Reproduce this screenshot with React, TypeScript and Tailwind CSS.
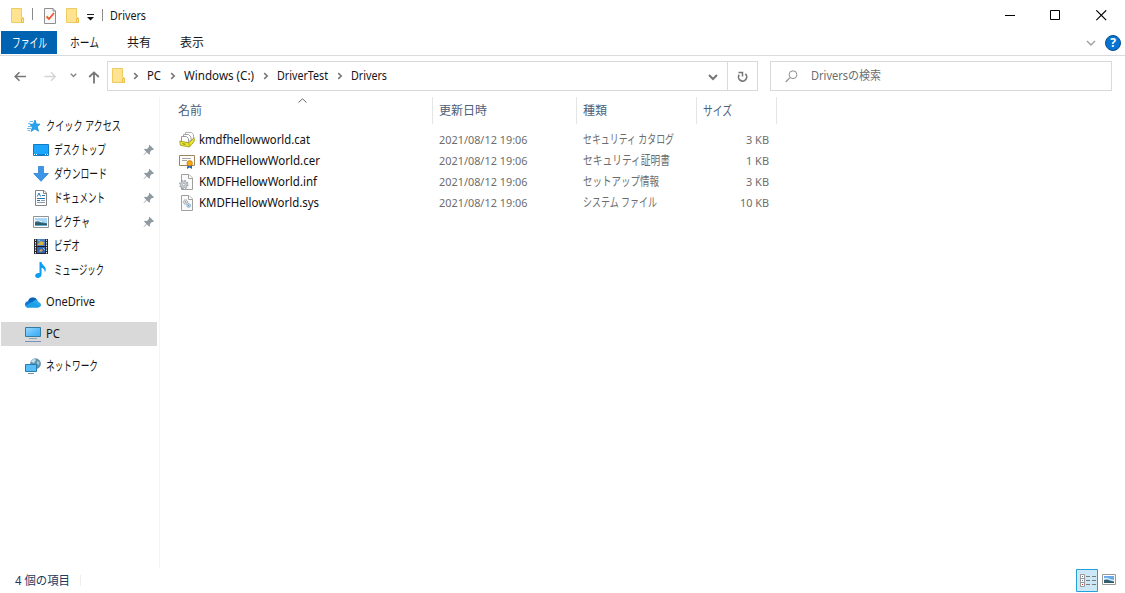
import { useLayoutEffect, useRef, type ReactNode } from "react";

function Label({ text, w, className = "" }: { text: string; w: number; className?: string }) {
  const ref = useRef<HTMLSpanElement>(null);
  useLayoutEffect(() => {
    const el = ref.current;
    if (!el) return;
    el.style.transform = "none";
    el.style.transform = `scaleX(${w / el.getBoundingClientRect().width})`;
  }, [text, w]);
  return (
    <span className={`block shrink-0 whitespace-nowrap ${className}`} style={{ width: w }}>
      <span ref={ref} className="inline-block origin-left">{text}</span>
    </span>
  );
}

function Svg({ w = 16, h = 16, children, className = "" }: { w?: number; h?: number; children: ReactNode; className?: string }) {
  return (
    <svg width={w} height={h} viewBox={`0 0 ${w} ${h}`} fill="none" className={`block shrink-0 ${className}`}>
      {children}
    </svg>
  );
}

const Folder = ({ className = "" }: { className?: string }) => (
  <Svg w={14} h={17} className={className}>
    <path d="M.5 1.500H10.500V10L12.500 11V15.500H.5Z" fill="#ffe391" stroke="#efcb63" />
    <path d="M10.500 11.500h2v4h-2z" fill="#ffe391" stroke="#e9c04d" />
  </Svg>
);

const Chevron = ({ className = "" }: { className?: string }) => (
  <Svg w={6} h={8} className={className}>
    <path d="M1.200 1.200L4.200 4L1.200 6.800" stroke="#777" strokeWidth="1.600" />
  </Svg>
);

const Pin = () => (
  <Svg w={12} h={12}>
    <path d="M6.500.8L11 5.300L9.900 6.100L8.900 5.900L6.900 8L7 10L6 10.500L3.800 8.300L.8 11.200L.5 10.900L3.200 7.700L1 5.500L1.900 4.700L4 4.900L6.100 2.800L5.700 1.700Z" fill="#8e9aa3" />
  </Svg>
);

const Star = () => (
  <Svg>
    <path d="M9 2L10.300 6L14 6.200L11.300 8.800L12.500 13.200L8.800 11L5 13.500L6.300 9.300L4 6.500L7.500 6Z" fill="#27a4f2" stroke="#1688d4" strokeWidth=".7" />
    <path d="M3.500 3.500H7M2 5.500H4.500M2 8.500H5M1 10.500H5M1.500 12.500H4" stroke="#4aaae6" strokeWidth=".8" />
  </Svg>
);

const Desktop = () => (
  <Svg>
    <path d="M.5 2.500H15.500V13.500H.5Z" fill="#1ca5fc" stroke="#137bc4" />
    <path d="M1 12.500H15" stroke="#0d7fd0" />
    <path d="M1 12.500h1M3 12.500h1M12 12.500h1M14 12.500h1" stroke="#fff" />
  </Svg>
);

const Download = () => (
  <Svg>
    <path d="M5.500.5H10.500V7.500H15.300L8 15.300L.7 7.500H5.500Z" fill="#3c95e7" stroke="#2e82d1" strokeWidth=".8" />
  </Svg>
);

const Document = () => (
  <Svg>
    <path d="M2.500.5H11L13.500 3V15.500H2.500Z" fill="#fff" stroke="#858585" />
    <path d="M10.500.5V3.500H13.500" stroke="#858585" />
    <path d="M4.300 6.500L6 3L7.600 6.500M9 5.500H12M4 8.500H12M4 10.500H7" stroke="#2377b5" />
    <path d="M8 10.500H12M4 12.500H12" stroke="#8b9aa5" />
  </Svg>
);

const Picture = () => (
  <Svg>
    <path d="M.5 2.500H15.500V13.500H.5Z" fill="#fff" stroke="#929292" />
    <path d="M2 4h12v8H2z" fill="#a9d7fa" />
    <path d="M2 7.500Q5 6 8 8L14 9.500V12H2Z" fill="#397895" />
    <path d="M2 9Q6 8 9 9.500H14V12H2Z" fill="#305b69" />
    <path d="M2 7Q5 6 9 8" stroke="#f1faff" />
    <path d="M2 11.500h12" stroke="#60a8d1" />
  </Svg>
);

const Video = () => (
  <Svg>
    <path d="M1 1h14v15H1z" fill="#25272a" />
    <path d="M4 1h8v7H4z" fill="#507fc4" />
    <path d="M4 9h8v6H4z" fill="#3465b5" />
    <path d="M2.500 1.500v14M13.500 1.500v14" stroke="#e5e5e5" strokeDasharray="1.500 1" />
    <path d="M5 6L8 3L11 4.500L10 7H5Z" fill="#d7b73a" />
    <path d="M6 13L8 11L10 12L8 14Z" fill="#dba63d" />
    <path d="M5 2l2 1M10 10l2 2" stroke="#87d0ff" />
    <path d="M4 8.500h8" stroke="#171b25" />
  </Svg>
);

const Music = () => (
  <Svg>
    <path d="M6.500 0H8.500C8.700 3.300 13.500 4 12.700 8.800L11.700 10.200C12.100 7.200 10.300 6.500 8.500 5.700V12.600C8.500 14.600 6.800 16 4.800 16C3 16 2 15 2.200 13.600C2.400 12 4.200 10.800 6.500 11.200Z" fill="#0c9cf3" />
  </Svg>
);

const OneDrive = () => (
  <Svg>
    <path d="M3 7A5 5 0 0 1 12.200 6L9 9L3.500 11Z" fill="#0765bd" />
    <path d="M4 7.500C1.500 6.800 0 8.500 0 10.400C0 12.300 1.500 13.500 3.500 13.500L10 9.500Z" fill="#1277d3" />
    <path d="M8 7.500C10 5.300 13 5.300 13.600 8.200C17 8.800 16.800 13.500 13 13.500H3.200C1.900 13.500 1 12.800.6 12Z" fill="#28a8ea" />
    <path d="M7.600 7.800L14.800 12.200L13 13.500H3.200C1.900 13.500 1 12.800.6 12Z" fill="#1d9ee8" />
  </Svg>
);

const Computer = () => (
  <Svg>
    <defs>
      <linearGradient id="screen" x1="0" y1="0" x2="1" y2="1">
        <stop stopColor="#9adbff" />
        <stop offset=".55" stopColor="#5bbcf9" />
        <stop offset="1" stopColor="#39a9f4" />
      </linearGradient>
    </defs>
    <path d="M.5 1.500H15.500V10.500H.5Z" fill="url(#screen)" stroke="#347c9f" />
    <path d="M4 12.500H12" stroke="#8da4b9" />
    <path d="M0 15.500H16" stroke="#7893c2" />
  </Svg>
);

const Network = () => (
  <Svg>
    <circle cx="10.500" cy="5.700" r="5.400" fill="#5e93ae" />
    <path d="M7 2Q10 0 11 2L9 5L6 4Z" fill="#c2dee6" />
    <path d="M12 3L14.500 4L14 7L12 6Z" fill="#9fc6d6" />
    <path d="M.5 6.500H11.500V13.500H.5Z" fill="#58bdf9" stroke="#277caf" />
    <path d="M3 15.500h6" stroke="#6893aa" />
  </Svg>
);

const Page = ({ children }: { children: ReactNode }) => (
  <Svg>
    <path d="M2.500.5H10L13.500 4V15.500H2.500Z" fill="#fafafa" stroke="#a0a0a0" />
    <path d="M9.500.5V4.500H13.500" fill="#fff" stroke="#a0a0a0" />
    {children}
  </Svg>
);

const CatFile = () => (
  <Svg>
    <path d="M6.500.5H12.500L14.500 2.500V7.500H6.500Z" fill="#fff" stroke="#b0b0b0" />
    <path d="M4.500 2.500H9.500L12 5V9H4.500Z" fill="#fff" stroke="#a5a5a5" />
    <path d="M2.500 4.500H7.500L9.500 6.500V10.500H2.500Z" fill="#fff" stroke="#9d9d9d" />
    <path d="M.8 9L9.800 10.800L15.200 5.800V9.500L10.500 15L1.300 13.300Z" fill="#ebe532" stroke="#96951c" strokeWidth=".8" />
    <path d="M9.800 10.800L10.500 14.800" stroke="#a6a01a" strokeWidth=".8" />
    <path d="M3.500 11.700l3 .6" stroke="#87851d" />
  </Svg>
);

const CerFile = () => (
  <Svg>
    <path d="M.5 2.500H15.500V12.500H.5Z" fill="#fffdf4" stroke="#9b8460" />
    <path d="M3 5.500H12M3 7.500H8" stroke="#a5a5b0" />
    <path d="M8.500 11L8 16L10.500 14.500L13 16V11Z" fill="#1868b8" />
    <circle cx="10.700" cy="10.300" r="2.700" fill="#f8aa18" stroke="#c47912" strokeWidth=".8" />
  </Svg>
);

const InfFile = () => (
  <Page>
    <circle cx="4.800" cy="10.500" r="4" stroke="#969ca2" strokeWidth="1.300" strokeDasharray="1.700 1.440" />
    <circle cx="4.800" cy="10.500" r="3.300" fill="#d4d7db" stroke="#989da3" strokeWidth=".7" />
    <circle cx="4.800" cy="10.500" r="1.300" fill="#fff" stroke="#8f959b" strokeWidth=".8" />
  </Page>
);

const SysFile = () => (
  <Page>
    <circle cx="6.500" cy="7" r="2.200" fill="#dce0e4" stroke="#929ca5" strokeDasharray="1.300 .6" />
    <circle cx="6.500" cy="7" r=".7" fill="#7e8b96" />
    <circle cx="9.700" cy="10.500" r="1.900" fill="#bddcf1" stroke="#7fa5c2" strokeDasharray="1.300 .5" />
    <circle cx="9.700" cy="10.500" r=".6" fill="#47789d" />
  </Page>
);

const quick = [
  { text: "デスクトップ", w: 52, icon: <Desktop />, pin: true },
  { text: "ダウンロード", w: 53, icon: <Download />, pin: true },
  { text: "ドキュメント", w: 51, icon: <Document />, pin: true },
  { text: "ピクチャ", w: 36, icon: <Picture />, pin: true },
  { text: "ビデオ", w: 26, icon: <Video />, pin: false },
  { text: "ミュージック", w: 50, icon: <Music />, pin: false },
];

const files = [
  { name: "kmdfhellowworld.cat", w: 111, type: "セキュリティ カタログ", tw: 91, size: "3 KB", sw: 23, icon: <CatFile /> },
  { name: "KMDFHellowWorld.cer", w: 121, type: "セキュリティ証明書", tw: 87, size: "1 KB", sw: 23, icon: <CerFile /> },
  { name: "KMDFHellowWorld.inf", w: 118, type: "セットアップ情報", tw: 76, size: "3 KB", sw: 23, icon: <InfFile /> },
  { name: "KMDFHellowWorld.sys", w: 120, type: "システム ファイル", tw: 74, size: "10 KB", sw: 29, icon: <SysFile /> },
];

const crumbs = [
  { text: "PC", w: 14 },
  { text: "Windows (C:)", w: 70 },
  { text: "DriverTest", w: 51 },
  { text: "Drivers", w: 36 },
];

export default function App() {
  return (
    <div className="flex h-[593px] w-[1125px] flex-col overflow-hidden bg-white font-['Noto_Sans','Noto_Sans_CJK_JP',sans-serif] text-[12px] leading-[18px] text-[#151515]">
      <header className="flex h-[31px] shrink-0 items-center pl-[11px]">
        <Folder className="-mt-px" />
        <div className="-mt-[3px] ml-[7px] h-3 w-px bg-[#8a8a8a]" />
        <Svg w={12} h={16} className="ml-[11px]">
          <path d="M.5.5H9L11.500 3V15.500H.5Z" fill="#f8f8f8" stroke="#8f8f8f" />
          <path d="M9 .5V3H11.500" stroke="#8f8f8f" />
          <path d="M2.500 8.500L5 11L10 5" stroke="#ee5726" strokeWidth="1.800" />
        </Svg>
        <Folder className="-mt-px ml-[10px]" />
        <Svg w={8} h={7} className="mt-[3px] ml-[7px]">
          <path d="M0 .5h7" stroke="#222" />
          <path d="M0 3H7L3.500 6.500Z" fill="#111" />
        </Svg>
        <div className="-mt-[2px] ml-[7px] h-3 w-px bg-[#8a8a8a]" />
        <Label text="Drivers" w={36} className="ml-[7px]" />
        <div className="ml-auto flex items-center pr-[18px]">
          <Svg w={10} h={11}><path d="M0 5.500h10" stroke="#000" /></Svg>
          <Svg w={11} h={11} className="ml-[35px]"><path d="M.5.5h9v9h-9z" stroke="#000" /></Svg>
          <Svg w={11} h={11} className="ml-[35px]"><path d="M.3.3L10.200 10.200M10.200.3L.3 10.200" stroke="#000" strokeWidth="1.200" /></Svg>
        </div>
      </header>

      <nav className="flex h-[25px] shrink-0 items-start border-b border-[#dadbdc] leading-[24px]">
        <div className="ml-px h-[23px] w-14 bg-[#0063b1] pl-[11px] leading-[23px] text-white"><Label text="ファイル" w={35} className="text-[13px]" /></div>
        <Label text="ホーム" w={29} className="-mt-px ml-[13px] text-[13px]" />
        <Label text="共有" w={24} className="ml-[28px]" />
        <Label text="表示" w={24} className="ml-[29px]" />
        <div className="ml-auto flex h-6 items-center pr-1">
          <Svg w={10} h={6}><path d="M1 1L5 5L9 1" stroke="#a0a0a0" strokeWidth="1.400" /></Svg>
          <div className="ml-[9px] flex size-4 items-center justify-center rounded-full border border-[#084f94] bg-[#0672d2] text-[12px] leading-none font-bold text-white">?</div>
        </div>
      </nav>

      <div className="flex h-10 shrink-0 pt-[5px]">
        <div className="flex h-[30px] w-[107px] items-center pl-[14px]">
          <Svg w={13} h={11}><path d="M5.500 1.300L1.200 5.500L5.500 9.700M1 5.500H12" stroke="#777" strokeWidth="1.600" /></Svg>
          <Svg w={13} h={11} className="ml-[17px]"><path d="M7 1.300L11.300 5.500L7 9.700M11.500 5.500H.5" stroke="#d4d4d4" strokeWidth="1.300" /></Svg>
          <Svg w={7} h={5} className="-mt-px ml-[13px]"><path d="M.8.800L3.500 3.500L6.200.8" stroke="#888" strokeWidth="1.500" /></Svg>
          <Svg w={12} h={13} className="mt-[2px] ml-[11px]"><path d="M1.200 6L6 1.400L10.800 6M6 1.500V12.500" stroke="#777" strokeWidth="1.800" /></Svg>
        </div>
        <div className="flex h-[30px] w-[651px] items-center border border-[#d9d9d9]">
          <Folder className="-mt-[2px] ml-[4px]" />
          {crumbs.map((c, i) => (
            <div key={c.text} className="flex items-center">
              <Chevron className={i === 0 ? "ml-[7px]" : "ml-[9px]"} />
              <Label text={c.text} w={c.w} className="ml-[8px]" />
            </div>
          ))}
          <Svg w={10} h={7} className="mt-[2px] mr-[9px] ml-auto"><path d="M1 1L5 5L9 1" stroke="#777" strokeWidth="2" /></Svg>
          <div className="flex h-full w-[30px] items-center justify-center border-l border-[#d9d9d9]">
            <Svg w={11} h={12} className="mt-px">
              <path d="M8.300 2.900A4.100 4.100 0 1 1 2.200 3.700" stroke="#777" strokeWidth="1.700" />
              <path d="M1.500 1.500H5.500V5.500" stroke="#777" strokeWidth="1.500" />
            </Svg>
          </div>
        </div>
        <div className="ml-[12px] flex h-[30px] w-[342px] items-center border border-[#d9d9d9] text-[#6d6d6d]">
          <Svg w={13} h={13} className="ml-[14px]">
            <circle cx="8" cy="4.700" r="3.900" stroke="#909090" /><path d="M5 7.700L.7 12" stroke="#909090" strokeWidth="1.200" />
          </Svg>
          <Label text="Driversの検索" w={70} className="ml-[13px]" />
        </div>
      </div>

      <main className="flex h-[472px] shrink-0">
        <aside className="mt-px h-[471px] w-[160px] shrink-0 border-r border-[#f4f4f4] pt-[17px]">
          <div className="flex h-6 items-center pl-[26px]">
            <Star /><Label text="クイック アクセス" w={75} className="-mt-[2px] ml-[4px] text-[13px]" />
          </div>
          {quick.map((q) => (
            <div key={q.text} className="flex h-6 items-center pl-[33px]">
              {q.icon}<Label text={q.text} w={q.w} className="-mt-[2px] ml-[5px] text-[13px]" />
              {q.pin && <div className="mr-[4px] ml-auto"><Pin /></div>}
            </div>
          ))}
          <div className="mt-2 flex h-6 items-center pl-[25px]"><OneDrive /><Label text="OneDrive" w={49} className="ml-[5px]" /></div>
          <div className="mt-2 ml-px flex h-6 w-[156px] items-center bg-[#d9d9d9] pl-[24px]"><Computer /><Label text="PC" w={14} className="ml-[5px]" /></div>
          <div className="mt-2 flex h-6 items-center pl-[25px]"><Network /><Label text="ネットワーク" w={52} className="-mt-[2px] ml-[5px] text-[13px]" /></div>
        </aside>

        <section className="w-[617px]">
          <div className="relative mt-px flex h-[27px] items-center text-[#4c607a]">
            <svg className="absolute top-[1px] left-[138px]" width="9" height="5" viewBox="0 0 9 5" fill="none"><path d="M.5 4.500L4.500.8L8.500 4.500" stroke="#666" /></svg>
            <div className="flex h-full w-[273px] items-center border-r border-[#e5e5e5] pl-[18px]"><Label text="名前" w={24} /></div>
            <div className="flex h-full w-[144px] items-center border-r border-[#e5e5e5] pl-[6px]"><Label text="更新日時" w={48} /></div>
            <div className="flex h-full w-[120px] items-center border-r border-[#e5e5e5] pl-[6px]"><Label text="種類" w={24} /></div>
            <div className="flex h-full w-[80px] items-center border-r border-[#e5e5e5] pl-[6px]"><Label text="サイズ" w={29} className="-mt-[2px] text-[13px]" /></div>
          </div>
          <div className="pt-[5px] text-[#6d6d6d]">
            {files.map((f) => (
              <div key={f.name} className="flex h-[21px] items-center">
                <div className="flex w-[279px] items-center pl-[19px]">
                  {f.icon}<Label text={f.name} w={f.w} className="ml-[4px] text-[#111]" />
                </div>
                <div className="w-[144px]"><Label text="2021/08/12 19:06" w={88.5} className="text-[11.500px]" /></div>
                <div className="w-[120px]"><Label text={f.type} w={f.tw} className="text-[12.500px]" /></div>
                <div className="flex w-[66px] justify-end"><Label text={f.size} w={f.sw} className="text-[11.500px]" /></div>
              </div>
            ))}
          </div>
        </section>
      </main>

      <footer className="flex h-[25px] shrink-0 items-center pl-[15px] text-[#20395f]">
        <Label text="4 個の項目" w={55} />
        <div className="ml-[10px] h-[11px] w-px bg-[#eee]" />
        <div className="ml-auto flex items-center pr-[9px]">
          <Svg w={22} h={23}>
            <path d="M.5.5h21v22H.5z" fill="#cce8f6" stroke="#26a0da" />
            <path d="M4.500 5.500h4v12h-4z" fill="#fff" stroke="#999" />
            <path d="M4.500 9.500h4M4.500 13.500h4" stroke="#999" />
            <path d="M6 7.500h1" stroke="#58758b" /><path d="M6 11.500h1" stroke="#4a77c6" /><path d="M6 15.500h1" stroke="#d02d28" />
            <path d="M10 7.500h4m2 0h4M10 11.500h4m2 0h4M10 15.500h4m2 0h4" stroke="#7b7b7b" />
          </Svg>
          <Svg w={14} h={11} className="-mt-[2px] ml-[4px]">
            <path d="M.5.5h13v10H.5z" fill="#fff" stroke="#999" />
            <path d="M2 2h10v7H2z" fill="#69a9ea" /><path d="M2 4Q5 3 8 5L12 6V8H2Z" fill="#d5eeff" /><path d="M2 6Q5 5 8 6.500L12 7.500V9H2Z" fill="#325e70" />
          </Svg>
        </div>
      </footer>
    </div>
  );
}
